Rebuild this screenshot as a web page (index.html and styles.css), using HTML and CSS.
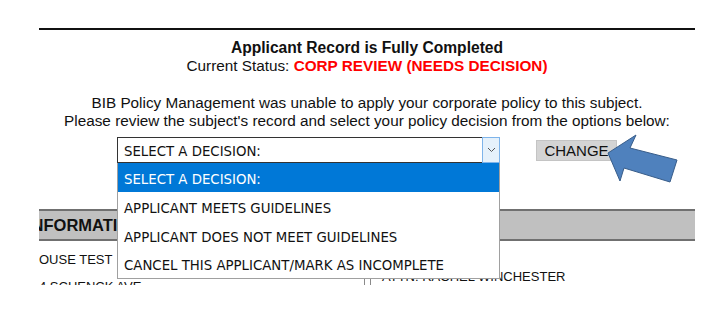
FILE: index.html
```html
<!DOCTYPE html>
<html lang="en">
<head>
    <meta charset="UTF-8">
    <title>Applicant Record</title>
    <link rel="stylesheet" href="styles.css">
</head>
<body>
    <div class="page">
        <div class="sheet">
            <div class="summary">
                <div class="title">Applicant Record is Fully Completed</div>
                <div class="status">Current Status: <span class="status-value">CORP REVIEW (NEEDS DECISION)</span></div>
                <p class="notice">BIB Policy Management was unable to apply your corporate policy to this subject.<br>Please review the subject's record and select your policy decision from the options below:</p>
            </div>

            <div class="decision-row">
                <div class="select">
                    <div class="select-value">SELECT A DECISION:</div>
                    <div class="select-arrow">
                        <svg width="9" height="6" viewBox="0 0 9 6"><path d="M1 1 L4.5 4.5 L8 1" fill="none" stroke="#555" stroke-width="1"/></svg>
                    </div>
                    <ul class="select-list">
                        <li class="selected">SELECT A DECISION:</li>
                        <li>APPLICANT MEETS GUIDELINES</li>
                        <li>APPLICANT DOES NOT MEET GUIDELINES</li>
                        <li>CANCEL THIS APPLICANT/MARK AS INCOMPLETE</li>
                    </ul>
                </div>
                <button class="change-btn">CHANGE</button>
            </div>

            <div class="info">
                <div class="info-head"><span>INFORMATION</span></div>
                <div class="info-body">
                    <div class="info-left">
                        <div class="info-line">OUSE TEST</div>
                        <div class="info-line">4 SCHENCK AVE</div>
                    </div>
                    <div class="info-right">
                        <div class="info-line">ATTN: RACHEL WINCHESTER</div>
                    </div>
                </div>
            </div>
        </div>

        <svg class="pointer" width="80" height="60" viewBox="600 130 80 60">
            <polygon points="608,153 636,135 630,148 677,160 670,182 624,168 620,181" fill="#4f81bd" stroke="#385d8a" stroke-width="1"/>
        </svg>
    </div>
</body>
</html>
```

FILE: styles.css
```css
body { margin: 0; background: #fff; font-family: "Liberation Sans", Arial, sans-serif; color: #111; }
.page { position: relative; width: 723px; height: 317px; padding-top: 28px; box-sizing: border-box; }
.sheet { margin-left: 39px; width: 656px; height: 257px; border-top: 2px solid #111; overflow: hidden; box-sizing: border-box; }

.summary { text-align: center; padding-top: 9px; font-size: 15.3px; line-height: 18px; }
.title { font-weight: bold; font-size: 15.6px; }
.status-value { color: #ff0000; font-weight: bold; }
.notice { margin: 19px 0 0; }

.decision-row { display: flex; align-items: flex-start; margin: 7px 0 0 78px; }
.select { position: relative; width: 383px; height: 26px; display: flex; }
.select-value { flex: 1; border: 1px solid #333; border-right: none; font-family: "DejaVu Sans Condensed", "DejaVu Sans", sans-serif; font-size: 14.8px; line-height: 25px; padding-left: 6px; }
.select-arrow { width: 16px; background: #e5f1fb; border: 1px solid #7eb4ea; display: flex; align-items: center; justify-content: center; }
.select-list { position: absolute; top: 26px; left: 0; width: 383px; box-sizing: border-box; margin: 0; padding: 0; list-style: none; background: #fff; border: 1px solid #a0a0a0; border-top: none; z-index: 2; font-family: "DejaVu Sans Condensed", "DejaVu Sans", sans-serif; font-size: 14.8px; }
.select-list li { height: 28.75px; line-height: 32px; padding-left: 6px; }
.select-list li.selected { background: #0078d7; color: #fff; }
.change-btn { margin: 3px 0 0 36px; width: 81px; height: 21px; padding: 0; background: #d4d4d4; border: 1px solid #c4c4c4; font-family: "Liberation Sans", Arial, sans-serif; font-size: 15px; line-height: 19px; color: #111; }

.info { margin-top: 46px; }
.info-head { height: 28px; background: #c0c0c0; border-top: 2px solid #707070; border-bottom: 2px solid #707070; font-size: 16.5px; font-weight: bold; line-height: 29px; overflow: hidden; white-space: nowrap; }
.info-head span { margin-left: -12px; }
.info-body { display: grid; grid-template-columns: 326px 1fr; font-size: 13px; }
.info-left { border-right: 1px solid #8a8a8a; padding-top: 12px; }
.info-left .info-line { height: 27px; line-height: 14px; }
.info-right { margin-left: 5px; border-left: 1px solid #8a8a8a; padding: 29px 0 0 11px; }
.info-right .info-line { line-height: 14px; }

.pointer { position: absolute; left: 600px; top: 130px; }
```
